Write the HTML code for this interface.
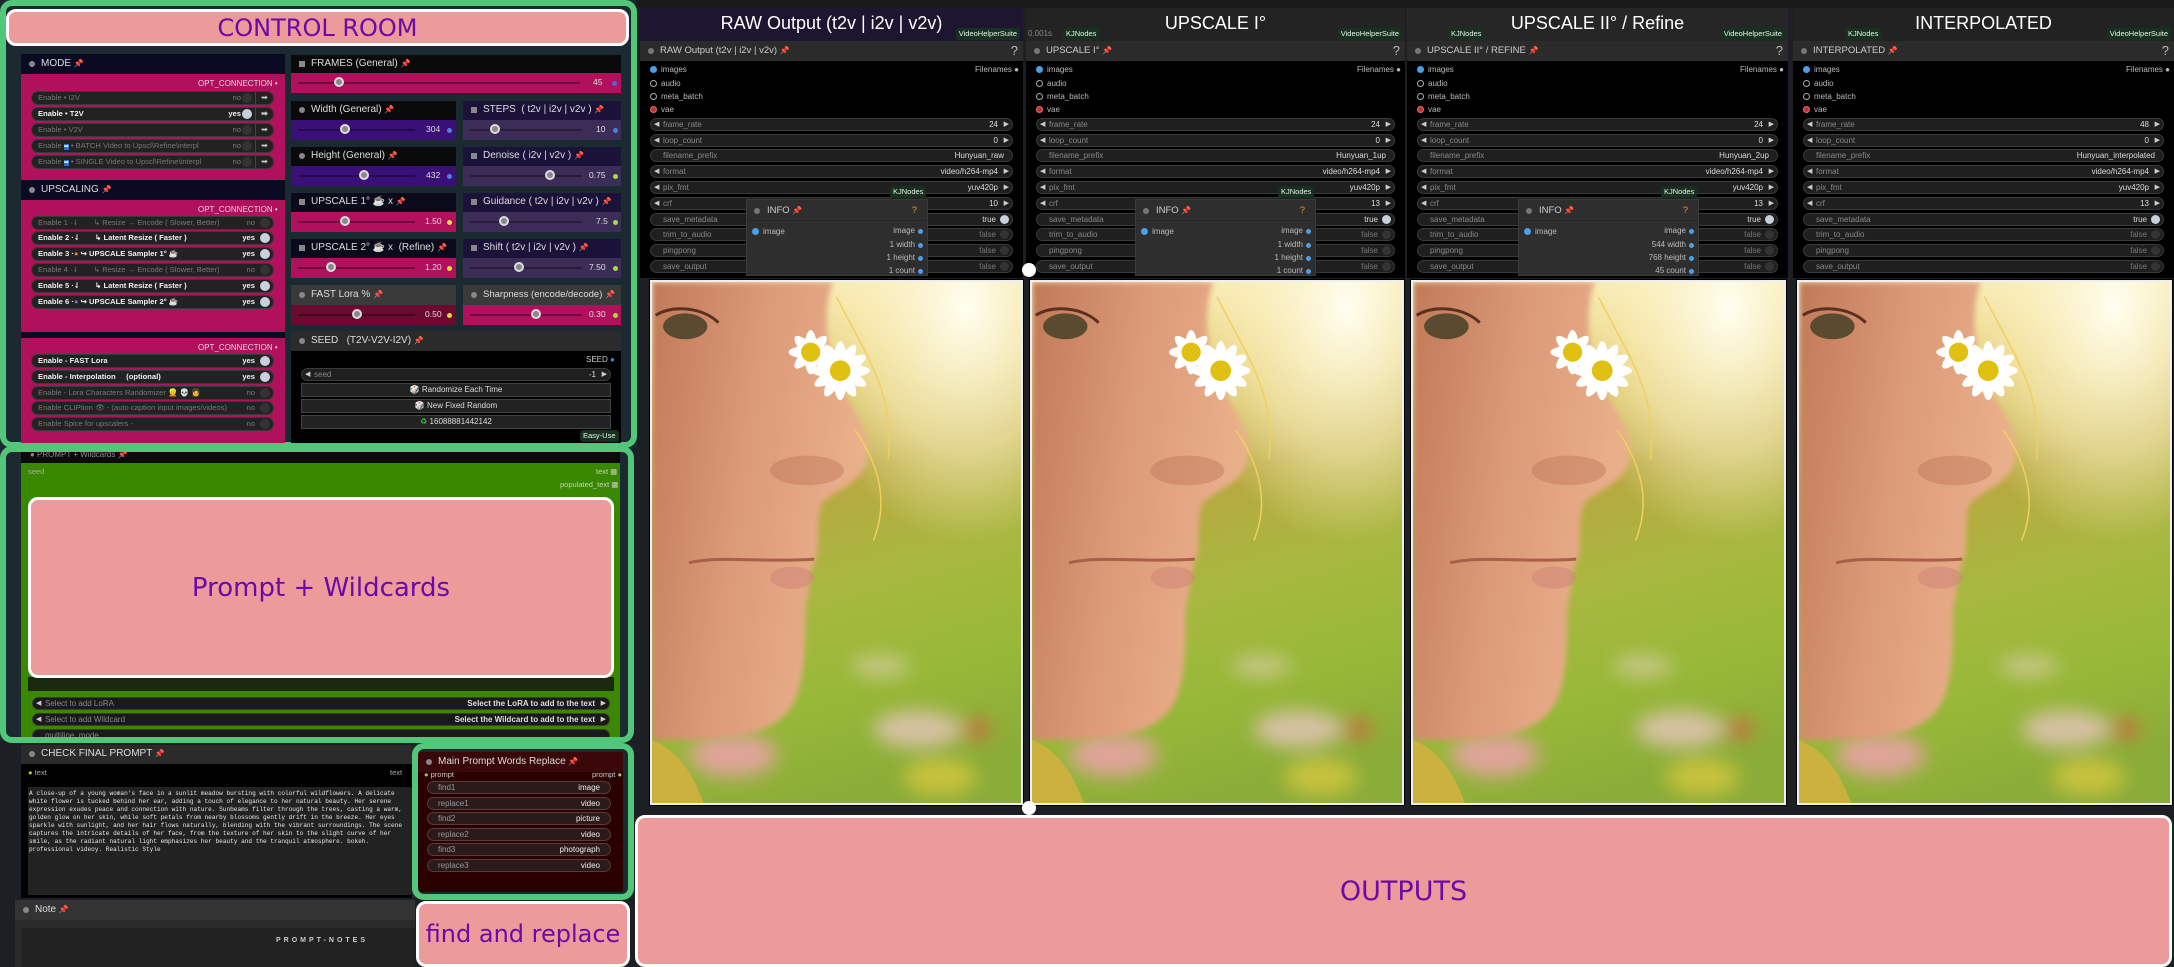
<!DOCTYPE html>
<html><head><meta charset="utf-8">
<style>
*{box-sizing:border-box;margin:0;padding:0}
body{width:2174px;height:967px;overflow:hidden;background:#1c2024;font-family:"Liberation Sans",sans-serif;position:relative}
.a{position:absolute}
.t{position:absolute;white-space:nowrap}
.gf{position:absolute;border:6px solid #52c77a;border-radius:12px}
.pink{position:absolute;background:#ec9a9a;border:3px solid #fff;border-radius:10px;display:flex;align-items:center;justify-content:center;color:#6b0aa8;font-family:"DejaVu Sans","Liberation Sans",sans-serif}
.row{position:absolute;left:31px;width:243px;height:14px;border-radius:7px;background:#222;border:1px solid #3a3a3a;font-size:7.6px;line-height:12px;color:#777;padding-left:6px;white-space:nowrap;overflow:hidden}
.row.on{color:#f0f0f0;font-weight:bold}
.row .v{position:absolute;right:32px;top:0}
.row .k{position:absolute;right:21px;top:1px;width:10px;height:10px;border-radius:50%;background:#333}
.row.on .k{background:#c8d0dc}
.row .ar{position:absolute;right:0;top:0;width:18px;height:12px;border-left:1px solid #444;color:#ccc;font-size:8px;text-align:center;background:#222}
.ttl{position:absolute;font-size:10px;color:#ddd;line-height:20px;padding-left:20px;white-space:nowrap}
.ttl:before{content:"";position:absolute;left:8px;top:7px;width:6px;height:6px;border-radius:50%;background:#888}
.ttl.sq:before{border-radius:0}
.pin{color:#e0502a;font-size:8px}
.sl{position:absolute;height:2px;background:rgba(0,0,0,.35);top:9px}
.kn{position:absolute;top:4px;width:10px;height:10px;border-radius:50%;border:2px solid #ddd;background:#888}
.sv{position:absolute;font-size:8.5px;color:#ddd;top:4px}
.dot{position:absolute;width:5px;height:5px;border-radius:50%;top:8px}
.col{position:absolute;top:0;height:967px}
.hd{position:absolute;top:8px;height:33px;left:0;right:0}
.hd .h{position:absolute;top:5px;left:0;right:0;text-align:center;color:#fff;font-size:18px}
.badge{position:absolute;background:#17301f;color:#e8f0e8;font-size:7.5px;padding:1px 3px;border-radius:3px;line-height:10px;white-space:nowrap}
.nt{position:absolute;top:41px;left:0;right:0;height:20px;background:#2b2b2b;color:#ccc;font-size:9.5px;line-height:20px;padding-left:20px;white-space:nowrap}
.nt:before{content:"";position:absolute;left:8px;top:7px;width:6px;height:6px;border-radius:50%;background:#777}
.nt .q{position:absolute;right:5px;top:0;font-size:13px;color:#bbb}
.nb{position:absolute;top:61px;left:0;right:0;height:217px;background:#000}
.io{position:absolute;left:10px;font-size:8px;color:#bbb}
.io:before{content:"";display:inline-block;width:5px;height:5px;border-radius:50%;border:1px solid #aaa;margin-right:4px;vertical-align:middle}
.io.b:before{background:#4aa0e8;border-color:#4aa0e8}
.io.r:before{background:#c03030;border-color:#e07070}
.w{position:absolute;left:10px;right:10px;height:13px;border-radius:7px;background:#1f1f1f;border:1px solid #3a3a3a;font-size:8px;line-height:11px;color:#888;white-space:nowrap}
.w .l{position:absolute;left:12px}
.w .r{position:absolute;right:14px;color:#ddd}
.w.arr:before{content:"◀";position:absolute;left:3px;color:#ccc;font-size:7px}
.w.arr:after{content:"▶";position:absolute;right:3px;color:#ccc;font-size:7px}
.w.tg .r{right:16px}
.w.tg:after{content:"";position:absolute;right:3px;top:1px;width:9px;height:9px;border-radius:50%;background:#333}
.w.tg.on:after{background:#c8d0dc}
.w.fl .r{right:8px}
.info{position:absolute;top:199px;height:77px;background:#2e2e2e;border:1px solid #3a3a3a}
.info .it{height:21px;border-bottom:1px solid #262626;color:#ccc;font-size:9.5px;line-height:21px;padding-left:20px;position:relative}
.info .it:before{content:"";position:absolute;left:7px;top:8px;width:6px;height:6px;border-radius:50%;background:#777}
.info .ir{position:absolute;right:12px;font-size:8px;color:#bbb;white-space:nowrap}
.info .ir:after{content:"";position:absolute;right:-8px;top:3px;width:5px;height:5px;border-radius:50%;background:#4aa0e8}
.img{position:absolute;top:280px;height:525px;border:2px solid #eee;outline:1px solid #000;overflow:hidden}
.pr{position:absolute;left:427px;width:184px;height:13px;border-radius:7px;background:#2a1a1a;border:1px solid #5a3a3a;font-size:8px;line-height:11px;color:#999;padding-left:10px}
.pr span{position:absolute;right:10px;color:#eee}
</style></head><body>

<svg width="0" height="0" style="position:absolute">
<defs>
<filter id="bl" x="-20%" y="-20%" width="140%" height="140%"><feGaussianBlur stdDeviation="2.5"/></filter>
<filter id="bl2"><feGaussianBlur stdDeviation="0.8"/></filter>
<linearGradient id="bg" x1="0.3" y1="0" x2="0.5" y2="1">
<stop offset="0" stop-color="#fbf0c0"/><stop offset="0.2" stop-color="#e0c868"/><stop offset="0.4" stop-color="#b8a840"/><stop offset="0.6" stop-color="#a8b840"/><stop offset="0.8" stop-color="#98b838"/><stop offset="1" stop-color="#8aac38"/>
</linearGradient>
<radialGradient id="sun" cx="0.85" cy="0.05" r="0.45">
<stop offset="0" stop-color="#fffef0"/><stop offset="0.6" stop-color="#fff4c8" stop-opacity="0.6"/><stop offset="1" stop-color="#fff4c8" stop-opacity="0"/>
</radialGradient>
<linearGradient id="sk" x1="0" y1="0" x2="1" y2="0.3">
<stop offset="0" stop-color="#c07a58"/><stop offset="0.5" stop-color="#dc9a78"/><stop offset="1" stop-color="#eab08c"/>
</linearGradient>
<symbol id="photo" viewBox="0 0 100 141" preserveAspectRatio="none">
<rect width="100" height="141" fill="url(#bg)"/>
<rect width="100" height="141" fill="url(#sun)"/>
<g filter="url(#bl)">
<ellipse cx="72" cy="121" rx="12" ry="5" fill="#f4c8d0" opacity=".7"/>
<ellipse cx="88" cy="121" rx="4" ry="3" fill="#e05040" opacity=".6"/>
<ellipse cx="78" cy="134" rx="10" ry="5" fill="#f0d040" opacity=".6"/>
<ellipse cx="62" cy="104" rx="8" ry="3" fill="#f0d8d0" opacity=".5"/>
<ellipse cx="22" cy="128" rx="12" ry="6" fill="#f0a0b0" opacity=".8"/>
</g>
<path d="M0,0 L49,0 C46,8 47,20 52,30 C56,37 60,42 58,49 C56,55 50,56 46,60 C44,66 46,72 44,76 C42,80 43,84 42,86 C41,90 42,96 41,104 C40,112 38,118 30,121 C22,124 10,124 0,124 Z" fill="url(#sk)" filter="url(#bl2)"/>
<path d="M0,124 C5,126 10,130 14,141 L0,141 Z" fill="#d8b040" opacity=".8"/>
<path d="M50,4 C58,20 66,30 64,48 M55,40 C62,50 64,60 60,70" stroke="#f0d060" stroke-width=".4" fill="none"/>
<path d="M10,76 C18,74 30,76 44,75" stroke="#a86048" stroke-width=".8" fill="none"/>
<ellipse cx="38" cy="80" rx="6" ry="3" fill="#d08878" opacity=".6"/>
<ellipse cx="42" cy="51" rx="10" ry="4" fill="#b87058" opacity=".4"/>
<ellipse cx="9" cy="12" rx="6" ry="3.5" fill="#5a4a30"/>
<path d="M1,9 C6,6 14,7 18,11" stroke="#5a3020" stroke-width=".8" fill="none"/>
<g transform="translate(51,24)">
<ellipse rx="2" ry="8" fill="#fff"/><ellipse rx="2" ry="8" fill="#fff" transform="rotate(30)"/><ellipse rx="2" ry="8" fill="#fff" transform="rotate(60)"/><ellipse rx="2" ry="8" fill="#fff" transform="rotate(90)"/><ellipse rx="2" ry="8" fill="#fff" transform="rotate(120)"/><ellipse rx="2" ry="8" fill="#fff" transform="rotate(150)"/>
<circle r="2.8" fill="#e0c010"/>
</g>
<g transform="translate(43,19)">
<ellipse rx="1.8" ry="6" fill="#fff"/><ellipse rx="1.8" ry="6" fill="#fff" transform="rotate(45)"/><ellipse rx="1.8" ry="6" fill="#fff" transform="rotate(90)"/><ellipse rx="1.8" ry="6" fill="#fff" transform="rotate(135)"/>
<circle r="2.6" fill="#e0c010"/>
</g>
</symbol>
</defs>
</svg>

<!-- CONTROL ROOM -->
<div class="a" style="left:0;top:0;width:637px;height:448px;background:#1b2a30"></div>
<div class="gf" style="left:0;top:0;width:637px;height:448px"></div>
<div class="pink" style="left:6px;top:9px;width:623px;height:37px;font-size:24px">CONTROL ROOM</div>

<!-- MODE -->
<div class="a" style="left:21px;top:54px;width:264px;height:20px;background:#0a0a22"></div>
<div class="ttl" style="left:21px;top:54px">MODE <span class="pin">📌</span></div>
<div class="a" style="left:21px;top:74px;width:264px;height:106px;background:#b0105c"></div>
<div class="t" style="left:198px;top:79px;font-size:8px;color:#ddd">OPT_CONNECTION •</div>
<div class="row" style="top:91px">Enable • I2V<span class="v">no</span><span class="k"></span><span class="ar">➡</span></div>
<div class="row on" style="top:107px">Enable • T2V<span class="v">yes</span><span class="k"></span><span class="ar">➡</span></div>
<div class="row" style="top:123px">Enable • V2V<span class="v">no</span><span class="k"></span><span class="ar">➡</span></div>
<div class="row" style="top:139px">Enable <span style="color:#fff;background:#2a70d0;font-size:6px">➡</span> • BATCH Video to Upscl\Refine\interpl<span class="v">no</span><span class="k"></span><span class="ar">➡</span></div>
<div class="row" style="top:155px">Enable <span style="color:#fff;background:#2a70d0;font-size:6px">➡</span> • SINGLE Video to Upscl\Refine\interpl<span class="v">no</span><span class="k"></span><span class="ar">➡</span></div>

<!-- UPSCALING -->
<div class="a" style="left:21px;top:180px;width:264px;height:20px;background:#0a0a22"></div>
<div class="ttl" style="left:21px;top:180px">UPSCALING <span class="pin">📌</span></div>
<div class="a" style="left:21px;top:200px;width:264px;height:132px;background:#b0105c"></div>
<div class="t" style="left:198px;top:205px;font-size:8px;color:#ddd">OPT_CONNECTION •</div>
<div class="row" style="top:216px">Enable 1 ·⇃ &nbsp;&nbsp;&nbsp;&nbsp;&nbsp;&nbsp;↳ Resize → Encode ( Slower, Better)<span class="v" style="right:18px;background:#222;padding-left:3px">no</span><span class="k" style="right:3px"></span></div>
<div class="row on" style="top:231px">Enable 2 ·⇃ &nbsp;&nbsp;&nbsp;&nbsp;&nbsp;&nbsp;↳ Latent Resize ( Faster )<span class="v" style="right:18px">yes</span><span class="k" style="right:3px"></span></div>
<div class="row on" style="top:247px">Enable 3 ·<span style="color:#f07020">●</span> ↪ UPSCALE Sampler 1° ☕<span class="v" style="right:18px">yes</span><span class="k" style="right:3px"></span></div>
<div class="row" style="top:263px">Enable 4 ·⇃ &nbsp;&nbsp;&nbsp;&nbsp;&nbsp;&nbsp;↳ Resize → Encode ( Slower, Better)<span class="v" style="right:18px;background:#222;padding-left:3px">no</span><span class="k" style="right:3px"></span></div>
<div class="row on" style="top:279px">Enable 5 ·⇃ &nbsp;&nbsp;&nbsp;&nbsp;&nbsp;&nbsp;↳ Latent Resize ( Faster )<span class="v" style="right:18px">yes</span><span class="k" style="right:3px"></span></div>
<div class="row on" style="top:295px">Enable 6 ·<span style="color:#7a60e0">●</span> ↪ UPSCALE Sampler 2° ☕<span class="v" style="right:18px">yes</span><span class="k" style="right:3px"></span></div>

<div class="a" style="left:21px;top:332px;width:264px;height:6px;background:#0a0a22"></div>
<div class="a" style="left:21px;top:338px;width:264px;height:105px;background:#b0105c"></div>
<div class="t" style="left:198px;top:343px;font-size:8px;color:#ddd">OPT_CONNECTION •</div>
<div class="row on" style="top:354px">Enable - FAST Lora<span class="v" style="right:18px">yes</span><span class="k" style="right:3px"></span></div>
<div class="row on" style="top:370px">Enable - Interpolation &nbsp;&nbsp;&nbsp;&nbsp;(optional)<span class="v" style="right:18px">yes</span><span class="k" style="right:3px"></span></div>
<div class="row" style="top:386px">Enable - Lora Characters Randomizer 👱 💀 👩<span class="v" style="right:18px">no</span><span class="k" style="right:3px"></span></div>
<div class="row" style="top:401px">Enable CLIPtion 👁 - (auto caption input images/videos)<span class="v" style="right:18px;background:#222;padding-left:3px">no</span><span class="k" style="right:3px"></span></div>
<div class="row" style="top:417px">Enable Spice for upscalers -<span class="v" style="right:18px">no</span><span class="k" style="right:3px"></span></div>

<!-- sliders -->
<div class="a" style="left:291px;top:55px;width:330px;height:18px;background:#0a0a0a"></div>
<div class="ttl sq" style="left:291px;top:54px">FRAMES (General) <span class="pin">📌</span></div>
<div class="a" style="left:291px;top:73px;width:330px;height:20px;background:#b0105c"><div class="sl" style="left:7px;width:282px"></div><div class="kn" style="left:43px"></div><div class="sv" style="left:302px">45</div><div class="dot" style="left:321px;background:#6060d0"></div></div>

<div class="a" style="left:291px;top:101px;width:165px;height:19px;background:#0a0a0a"></div>
<div class="ttl" style="left:291px;top:100px">Width (General) <span class="pin">📌</span></div>
<div class="a" style="left:291px;top:120px;width:165px;height:20px;background:#3a1078"><div class="sl" style="left:7px;width:117px"></div><div class="kn" style="left:49px"></div><div class="sv" style="left:135px">304</div><div class="dot" style="left:156px;background:#4a80e0"></div></div>
<div class="a" style="left:463px;top:101px;width:158px;height:19px;background:#1a1238"></div>
<div class="ttl sq" style="left:463px;top:100px">STEPS &nbsp;( t2v | i2v | v2v ) <span class="pin">📌</span></div>
<div class="a" style="left:463px;top:120px;width:158px;height:20px;background:#3c2d58"><div class="sl" style="left:7px;width:112px"></div><div class="kn" style="left:27px"></div><div class="sv" style="left:133px">10</div><div class="dot" style="left:150px;background:#4a80e0"></div></div>

<div class="a" style="left:291px;top:147px;width:165px;height:19px;background:#0a0a0a"></div>
<div class="ttl" style="left:291px;top:146px">Height (General) <span class="pin">📌</span></div>
<div class="a" style="left:291px;top:166px;width:165px;height:20px;background:#3a1078"><div class="sl" style="left:7px;width:117px"></div><div class="kn" style="left:68px"></div><div class="sv" style="left:135px">432</div><div class="dot" style="left:156px;background:#4a80e0"></div></div>
<div class="a" style="left:463px;top:147px;width:158px;height:19px;background:#1a1238"></div>
<div class="ttl sq" style="left:463px;top:146px">Denoise ( i2v | v2v ) <span class="pin">📌</span></div>
<div class="a" style="left:463px;top:166px;width:158px;height:20px;background:#3c2d58"><div class="sl" style="left:7px;width:112px"></div><div class="kn" style="left:82px"></div><div class="sv" style="left:126px">0.75</div><div class="dot" style="left:150px;background:#a0e040"></div></div>

<div class="a" style="left:291px;top:193px;width:165px;height:19px;background:#0a0a1a"></div>
<div class="ttl sq" style="left:291px;top:192px">UPSCALE 1° ☕ x <span class="pin">📌</span></div>
<div class="a" style="left:291px;top:212px;width:165px;height:20px;background:#b0105c"><div class="sl" style="left:7px;width:117px"></div><div class="kn" style="left:49px"></div><div class="sv" style="left:134px">1.50</div><div class="dot" style="left:156px;background:#e0e040"></div></div>
<div class="a" style="left:463px;top:193px;width:158px;height:19px;background:#1a1238"></div>
<div class="ttl sq" style="left:463px;top:192px">Guidance ( t2v | i2v | v2v ) <span class="pin">📌</span></div>
<div class="a" style="left:463px;top:212px;width:158px;height:20px;background:#3c2d58"><div class="sl" style="left:7px;width:112px"></div><div class="kn" style="left:36px"></div><div class="sv" style="left:133px">7.5</div><div class="dot" style="left:150px;background:#a0e040"></div></div>

<div class="a" style="left:291px;top:239px;width:165px;height:19px;background:#0a0a1a"></div>
<div class="ttl sq" style="left:291px;top:238px">UPSCALE 2° ☕ x &nbsp;(Refine) <span class="pin">📌</span></div>
<div class="a" style="left:291px;top:258px;width:165px;height:20px;background:#b0105c"><div class="sl" style="left:7px;width:117px"></div><div class="kn" style="left:35px"></div><div class="sv" style="left:134px">1.20</div><div class="dot" style="left:156px;background:#e0e040"></div></div>
<div class="a" style="left:463px;top:239px;width:158px;height:19px;background:#1a1238"></div>
<div class="ttl sq" style="left:463px;top:238px">Shift ( t2v | i2v | v2v ) <span class="pin">📌</span></div>
<div class="a" style="left:463px;top:258px;width:158px;height:20px;background:#3c2d58"><div class="sl" style="left:7px;width:112px"></div><div class="kn" style="left:51px"></div><div class="sv" style="left:126px">7.50</div><div class="dot" style="left:150px;background:#a0e040"></div></div>

<div class="a" style="left:291px;top:285px;width:165px;height:20px;background:#3a3a3a"></div>
<div class="ttl" style="left:291px;top:285px">FAST Lora % <span class="pin">📌</span></div>
<div class="a" style="left:291px;top:305px;width:165px;height:20px;background:#6a0a30"><div class="sl" style="left:7px;width:117px"></div><div class="kn" style="left:61px"></div><div class="sv" style="left:134px">0.50</div><div class="dot" style="left:156px;background:#e0e040"></div></div>
<div class="a" style="left:463px;top:285px;width:158px;height:20px;background:#3a3a3a"></div>
<div class="ttl" style="left:463px;top:285px;font-size:9.5px">Sharpness (encode/decode) <span class="pin">📌</span></div>
<div class="a" style="left:463px;top:305px;width:158px;height:20px;background:#b0105c"><div class="sl" style="left:7px;width:112px"></div><div class="kn" style="left:68px"></div><div class="sv" style="left:126px">0.30</div><div class="dot" style="left:150px;background:#a0e040"></div></div>

<!-- SEED -->
<div class="a" style="left:291px;top:331px;width:330px;height:20px;background:#2b2b2b"></div>
<div class="ttl" style="left:291px;top:331px">SEED &nbsp;&nbsp;(T2V-V2V-I2V) <span class="pin">📌</span></div>
<div class="a" style="left:291px;top:351px;width:330px;height:92px;background:#000"></div>
<div class="t" style="left:586px;top:355px;font-size:8px;color:#ccc">SEED <span style="color:#4a80e0">●</span></div>
<div class="w arr" style="left:301px;right:auto;width:310px;top:368px"><span class="l" style="color:#888">seed</span><span class="r">-1</span></div>
<div class="a" style="left:301px;top:383px;width:310px;height:14px;background:#222;border:1px solid #444;color:#ddd;font-size:8px;text-align:center;line-height:12px">🎲 Randomize Each Time</div>
<div class="a" style="left:301px;top:399px;width:310px;height:14px;background:#222;border:1px solid #444;color:#ddd;font-size:8px;text-align:center;line-height:12px">🎲 New Fixed Random</div>
<div class="a" style="left:301px;top:415px;width:310px;height:14px;background:#222;border:1px solid #444;color:#ddd;font-size:8px;text-align:center;line-height:12px"><span style="color:#3c3">♻</span> 16088881442142</div>
<div class="badge" style="left:580px;top:430px">Easy-Use</div>

<!-- PROMPT -->
<div class="a" style="left:0;top:448px;width:632px;height:293px;background:#1b2a30"></div>
<div class="a" style="left:21px;top:451px;width:599px;height:12px;background:#0a0a0a"></div>
<div class="t" style="left:30px;top:450px;font-size:8px;color:#888">● PROMPT + Wildcards <span class="pin">📌</span></div>
<div class="a" style="left:21px;top:463px;width:599px;height:278px;background:#3a8800"></div>
<div class="t" style="left:28px;top:467px;font-size:7.5px;color:#aaa">seed</div>
<div class="t" style="left:596px;top:467px;font-size:7.5px;color:#ccc">text ▦</div>
<div class="t" style="left:560px;top:480px;font-size:7.5px;color:#ccc">populated_text ▦</div>
<div class="a" style="left:28px;top:677px;width:586px;height:14px;background:#1a2a10"></div>
<div class="pink" style="left:28px;top:497px;width:586px;height:181px;font-size:26px">Prompt + Wildcards</div>
<div class="w arr" style="left:32px;right:auto;width:578px;top:697px;background:#1a1a1a"><span class="l">Select to add LoRA</span><span class="r" style="font-weight:bold">Select the LoRA to add to the text</span></div>
<div class="w arr" style="left:32px;right:auto;width:578px;top:713px;background:#1a1a1a"><span class="l">Select to add Wildcard</span><span class="r" style="font-weight:bold">Select the Wildcard to add to the text</span></div>
<div class="w" style="left:32px;right:auto;width:578px;top:729px;background:#1a1a1a"><span class="l">multiline_mode</span></div>
<div class="gf" style="left:0;top:446px;width:634px;height:297px"></div>

<!-- CHECK FINAL PROMPT -->
<div class="a" style="left:21px;top:745px;width:392px;height:19px;background:#2b2b2b"></div>
<div class="ttl" style="left:21px;top:744px">CHECK FINAL PROMPT <span class="pin">📌</span></div>
<div class="a" style="left:21px;top:764px;width:392px;height:134px;background:#000"></div>
<div class="t" style="left:28px;top:768px;font-size:7.5px;color:#aaa"><span style="color:#a0d040">●</span> text</div>
<div class="t" style="left:390px;top:768px;font-size:7.5px;color:#aaa">text</div>
<div class="a" style="left:28px;top:787px;width:385px;height:108px;background:#222;font-family:'Liberation Mono',monospace;font-size:6.1px;line-height:8px;color:#e8e8e8;padding:3px 1px;white-space:pre;overflow:hidden">A close-up of a young woman's face in a sunlit meadow bursting with colorful wildflowers. A delicate
white flower is tucked behind her ear, adding a touch of elegance to her natural beauty. Her serene
expression exudes peace and connection with nature. Sunbeams filter through the trees, casting a warm,
golden glow on her skin, while soft petals from nearby blossoms gently drift in the breeze. Her eyes
sparkle with sunlight, and her hair flows naturally, blending with the vibrant surroundings. The scene
captures the intricate details of her face, from the texture of her skin to the slight curve of her
smile, as the radiant natural light emphasizes her beauty and the tranquil atmosphere. bokeh.
professional videoy. Realistic Style</div>

<!-- Note -->
<div class="a" style="left:15px;top:900px;width:400px;height:20px;background:#333"></div>
<div class="ttl" style="left:15px;top:900px">Note <span class="pin">📌</span></div>
<div class="a" style="left:15px;top:920px;width:400px;height:47px;background:#2a2a2a"></div>
<div class="a" style="left:21px;top:928px;width:394px;height:39px;background:#222"></div>
<div class="t" style="left:276px;top:937px;font-size:7px;letter-spacing:3px;color:#ccc;font-weight:bold">PROMPT-NOTES</div>

<!-- find replace -->
<div class="a" style="left:412px;top:745px;width:222px;height:153px;background:#1b2a30"></div>
<div class="a" style="left:418px;top:752px;width:205px;height:20px;background:#3a0808"></div>
<div class="ttl" style="left:418px;top:752px">Main Prompt Words Replace <span class="pin">📌</span></div>
<div class="a" style="left:418px;top:772px;width:205px;height:120px;background:#2a0000"></div>
<div class="t" style="left:424px;top:770px;font-size:7.5px;color:#ccc"><span style="color:#a0d040">●</span> prompt</div>
<div class="t" style="left:592px;top:770px;font-size:7.5px;color:#ccc">prompt <span style="color:#a0d040">●</span></div>
<div class="pr" style="top:781px">find1<span>image</span></div>
<div class="pr" style="top:797px">replace1<span>video</span></div>
<div class="pr" style="top:812px">find2<span>picture</span></div>
<div class="pr" style="top:828px">replace2<span>video</span></div>
<div class="pr" style="top:843px">find3<span>photograph</span></div>
<div class="pr" style="top:859px">replace3<span>video</span></div>
<div class="gf" style="left:412px;top:743px;width:222px;height:157px"></div>
<div class="pink" style="left:416px;top:901px;width:214px;height:66px;font-size:24px">find and replace</div>

<!-- OUTPUT COLUMNS -->
<div class="a" style="left:636px;top:0;width:1538px;height:8px;background:#1a1a1a"></div>

<!-- col1 -->
<div class="col" style="left:640px;width:383px">
<div class="hd" style="background:#1e1530"><div class="h">RAW Output (t2v | i2v | v2v)</div><div class="badge" style="right:3px;top:20px">VideoHelperSuite</div></div>
<div class="nt">RAW Output (t2v | i2v | v2v) <span class="pin">📌</span><span class="q">?</span></div>
<div class="nb"></div>
<div class="io b" style="top:65px">images</div><div class="t" style="right:4px;top:65px;font-size:8px;color:#bbb">Filenames ●</div>
<div class="io" style="top:79px">audio</div><div class="io" style="top:92px">meta_batch</div><div class="io r" style="top:105px">vae</div>
<div class="w arr" style="top:118px"><span class="l">frame_rate</span><span class="r">24</span></div>
<div class="w arr" style="top:134px"><span class="l">loop_count</span><span class="r">0</span></div>
<div class="w fl" style="top:149px"><span class="l">filename_prefix</span><span class="r">Hunyuan_raw</span></div>
<div class="w arr" style="top:165px"><span class="l">format</span><span class="r">video/h264-mp4</span></div>
<div class="w arr" style="top:181px"><span class="l">pix_fmt</span><span class="r">yuv420p</span></div>
<div class="w arr" style="top:197px"><span class="l">crf</span><span class="r">10</span></div>
<div class="w tg on" style="top:213px"><span class="l">save_metadata</span><span class="r">true</span></div>
<div class="w tg" style="top:228px"><span class="l">trim_to_audio</span><span class="r" style="color:#777">false</span></div>
<div class="w tg" style="top:244px"><span class="l">pingpong</span><span class="r" style="color:#777">false</span></div>
<div class="w tg" style="top:260px"><span class="l">save_output</span><span class="r" style="color:#777">false</span></div>
<div class="badge" style="left:250px;top:186px">KJNodes</div>
<div class="info" style="left:106px;width:182px"><div class="it">INFO <span class="pin">📌</span><span style="position:absolute;right:10px;color:#e0a020">?</span></div>
<div class="io b" style="top:27px;left:5px">image</div>
<div class="ir" style="top:26px">image</div><div class="ir" style="top:40px">1 width</div><div class="ir" style="top:53px">1 height</div><div class="ir" style="top:66px">1 count</div></div>
<div class="img" style="left:10px;width:373px"><svg width="100%" height="100%"><use href="#photo" width="100%" height="100%"/></svg></div>
</div>

<!-- col2 -->
<div class="col" style="left:1026px;width:379px">
<div class="hd" style="background:#232323"><div class="h">UPSCALE I°</div><div class="t" style="left:2px;top:21px;font-size:8px;color:#888">0.001s</div><div class="badge" style="left:37px;top:20px">KJNodes</div><div class="badge" style="right:3px;top:20px">VideoHelperSuite</div></div>
<div class="nt">UPSCALE I° <span class="pin">📌</span><span class="q">?</span></div>
<div class="nb"></div>
<div class="io b" style="top:65px">images</div><div class="t" style="right:4px;top:65px;font-size:8px;color:#bbb">Filenames ●</div>
<div class="io" style="top:79px">audio</div><div class="io" style="top:92px">meta_batch</div><div class="io r" style="top:105px">vae</div>
<div class="w arr" style="top:118px"><span class="l">frame_rate</span><span class="r">24</span></div>
<div class="w arr" style="top:134px"><span class="l">loop_count</span><span class="r">0</span></div>
<div class="w fl" style="top:149px"><span class="l">filename_prefix</span><span class="r">Hunyuan_1up</span></div>
<div class="w arr" style="top:165px"><span class="l">format</span><span class="r">video/h264-mp4</span></div>
<div class="w arr" style="top:181px"><span class="l">pix_fmt</span><span class="r">yuv420p</span></div>
<div class="w arr" style="top:197px"><span class="l">crf</span><span class="r">13</span></div>
<div class="w tg on" style="top:213px"><span class="l">save_metadata</span><span class="r">true</span></div>
<div class="w tg" style="top:228px"><span class="l">trim_to_audio</span><span class="r" style="color:#777">false</span></div>
<div class="w tg" style="top:244px"><span class="l">pingpong</span><span class="r" style="color:#777">false</span></div>
<div class="w tg" style="top:260px"><span class="l">save_output</span><span class="r" style="color:#777">false</span></div>
<div class="badge" style="left:252px;top:186px">KJNodes</div>
<div class="info" style="left:109px;width:181px"><div class="it">INFO <span class="pin">📌</span><span style="position:absolute;right:10px;color:#e0a020">?</span></div>
<div class="io b" style="top:27px;left:5px">image</div>
<div class="ir" style="top:26px">image</div><div class="ir" style="top:40px">1 width</div><div class="ir" style="top:53px">1 height</div><div class="ir" style="top:66px">1 count</div></div>
<div class="img" style="left:4px;width:374px"><svg width="100%" height="100%"><use href="#photo" width="100%" height="100%"/></svg></div>
</div>

<!-- col3 -->
<div class="col" style="left:1407px;width:381px">
<div class="hd" style="background:#262626"><div class="h">UPSCALE II° / Refine</div><div class="badge" style="left:41px;top:20px">KJNodes</div><div class="badge" style="right:3px;top:20px">VideoHelperSuite</div></div>
<div class="nt">UPSCALE II° / REFINE <span class="pin">📌</span><span class="q">?</span></div>
<div class="nb"></div>
<div class="io b" style="top:65px">images</div><div class="t" style="right:4px;top:65px;font-size:8px;color:#bbb">Filenames ●</div>
<div class="io" style="top:79px">audio</div><div class="io" style="top:92px">meta_batch</div><div class="io r" style="top:105px">vae</div>
<div class="w arr" style="top:118px"><span class="l">frame_rate</span><span class="r">24</span></div>
<div class="w arr" style="top:134px"><span class="l">loop_count</span><span class="r">0</span></div>
<div class="w fl" style="top:149px"><span class="l">filename_prefix</span><span class="r">Hunyuan_2up</span></div>
<div class="w arr" style="top:165px"><span class="l">format</span><span class="r">video/h264-mp4</span></div>
<div class="w arr" style="top:181px"><span class="l">pix_fmt</span><span class="r">yuv420p</span></div>
<div class="w arr" style="top:197px"><span class="l">crf</span><span class="r">13</span></div>
<div class="w tg on" style="top:213px"><span class="l">save_metadata</span><span class="r">true</span></div>
<div class="w tg" style="top:228px"><span class="l">trim_to_audio</span><span class="r" style="color:#777">false</span></div>
<div class="w tg" style="top:244px"><span class="l">pingpong</span><span class="r" style="color:#777">false</span></div>
<div class="w tg" style="top:260px"><span class="l">save_output</span><span class="r" style="color:#777">false</span></div>
<div class="badge" style="left:254px;top:186px">KJNodes</div>
<div class="info" style="left:111px;width:181px"><div class="it">INFO <span class="pin">📌</span><span style="position:absolute;right:10px;color:#e0a020">?</span></div>
<div class="io b" style="top:27px;left:5px">image</div>
<div class="ir" style="top:26px">image</div><div class="ir" style="top:40px">544 width</div><div class="ir" style="top:53px">768 height</div><div class="ir" style="top:66px">45 count</div></div>
<div class="img" style="left:4px;width:375px"><svg width="100%" height="100%"><use href="#photo" width="100%" height="100%"/></svg></div>
</div>

<!-- col4 -->
<div class="col" style="left:1793px;width:381px">
<div class="hd" style="background:#222"><div class="h">INTERPOLATED</div><div class="badge" style="left:52px;top:20px">KJNodes</div><div class="badge" style="right:3px;top:20px">VideoHelperSuite</div></div>
<div class="nt">INTERPOLATED <span class="pin">📌</span><span class="q">?</span></div>
<div class="nb"></div>
<div class="io b" style="top:65px">images</div><div class="t" style="right:4px;top:65px;font-size:8px;color:#bbb">Filenames ●</div>
<div class="io" style="top:79px">audio</div><div class="io" style="top:92px">meta_batch</div><div class="io r" style="top:105px">vae</div>
<div class="w arr" style="top:118px"><span class="l">frame_rate</span><span class="r">48</span></div>
<div class="w arr" style="top:134px"><span class="l">loop_count</span><span class="r">0</span></div>
<div class="w fl" style="top:149px"><span class="l">filename_prefix</span><span class="r">Hunyuan_interpolated</span></div>
<div class="w arr" style="top:165px"><span class="l">format</span><span class="r">video/h264-mp4</span></div>
<div class="w arr" style="top:181px"><span class="l">pix_fmt</span><span class="r">yuv420p</span></div>
<div class="w arr" style="top:197px"><span class="l">crf</span><span class="r">13</span></div>
<div class="w tg on" style="top:213px"><span class="l">save_metadata</span><span class="r">true</span></div>
<div class="w tg" style="top:228px"><span class="l">trim_to_audio</span><span class="r" style="color:#777">false</span></div>
<div class="w tg" style="top:244px"><span class="l">pingpong</span><span class="r" style="color:#777">false</span></div>
<div class="w tg" style="top:260px"><span class="l">save_output</span><span class="r" style="color:#777">false</span></div>
<div class="img" style="left:4px;width:375px"><svg width="100%" height="100%"><use href="#photo" width="100%" height="100%"/></svg></div>
</div>

<div class="a" style="left:1022px;top:263px;width:14px;height:14px;border-radius:50%;background:#fff"></div>
<div class="a" style="left:1022px;top:801px;width:14px;height:14px;border-radius:50%;background:#fff"></div>

<div class="pink" style="left:635px;top:815px;width:1537px;height:152px;font-size:27px">OUTPUTS</div>
</body></html>
